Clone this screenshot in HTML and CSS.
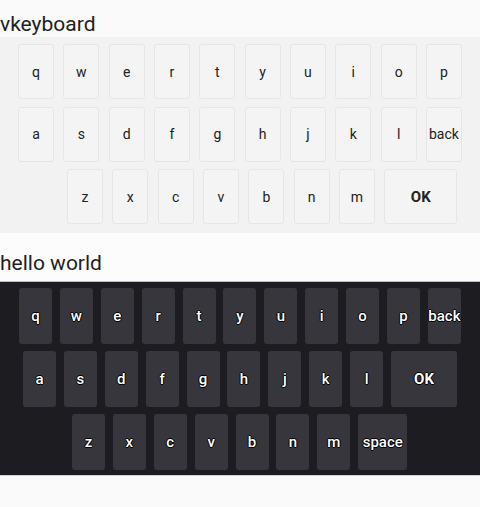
FILE: index.html
```html
<!DOCTYPE html>
<html>
<head>
<meta charset="utf-8">
<link rel="stylesheet" href="styles.css">
</head>
<body>
<div class="title first">vkeyboard</div>
<div class="kb light">
  <div class="row r1">
    <div class="key">q</div><div class="key">w</div><div class="key">e</div><div class="key">r</div><div class="key">t</div><div class="key">y</div><div class="key">u</div><div class="key">i</div><div class="key">o</div><div class="key">p</div>
  </div>
  <div class="row r2">
    <div class="key">a</div><div class="key">s</div><div class="key">d</div><div class="key">f</div><div class="key">g</div><div class="key">h</div><div class="key">j</div><div class="key">k</div><div class="key">l</div><div class="key">back</div>
  </div>
  <div class="row r3">
    <div class="key">z</div><div class="key">x</div><div class="key">c</div><div class="key">v</div><div class="key">b</div><div class="key">n</div><div class="key">m</div><div class="key ok">OK</div>
  </div>
</div>
<div class="title second">hello world</div>
<div class="kb dark">
  <div class="row r1">
    <div class="key">q</div><div class="key">w</div><div class="key">e</div><div class="key">r</div><div class="key">t</div><div class="key">y</div><div class="key">u</div><div class="key">i</div><div class="key">o</div><div class="key">p</div><div class="key">back</div>
  </div>
  <div class="row r2">
    <div class="key">a</div><div class="key">s</div><div class="key">d</div><div class="key">f</div><div class="key">g</div><div class="key">h</div><div class="key">j</div><div class="key">k</div><div class="key">l</div><div class="key ok">OK</div>
  </div>
  <div class="row r3">
    <div class="key">z</div><div class="key">x</div><div class="key">c</div><div class="key">v</div><div class="key">b</div><div class="key">n</div><div class="key">m</div><div class="key space">space</div>
  </div>
</div>
</body>
</html>
```
FILE: styles.css
```css
html, body {
  margin: 0;
  padding: 0;
  background: #fafafa;
  font-family: Roboto, "Liberation Sans", sans-serif;
}
.title {
  box-sizing: border-box;
  font-size: 21px;
  line-height: 23px;
  color: #1e1e1e;
  white-space: nowrap;
}
.title.first {
  height: 37px;
  padding-top: 13px;
}
.title.second {
  height: 48px;
  padding-top: 19px;
  background: #fcfcfc;
}
.kb {
  display: flex;
  flex-direction: column;
}
.row {
  display: flex;
}
.key {
  box-sizing: border-box;
  display: flex;
  align-items: center;
  justify-content: center;
  flex: none;
}

/* light keyboard */
.light {
  background: #f2f2f2;
  padding: 7px 0 9px;
  gap: 7.5px;
}
.light .row {
  gap: 9.33px;
  padding-left: 18px;
}
.light .row.r3 {
  padding-left: 67px;
}
.light .key {
  width: 36px;
  height: 55px;
  background: #f4f4f4;
  border: 1px solid #e6e6e6;
  border-radius: 3px;
  font-size: 14px;
  color: #222;
}
.light .key.ok {
  width: 73px;
  font-weight: 700;
  font-size: 15px;
}

/* dark keyboard */
.dark {
  background: #1d1c21;
  border-top: 1px solid #bdbdbd;
  border-bottom: 1px solid #d4d4d4;
  padding: 6px 0 5px;
  gap: 7px;
}
.dark .row {
  gap: 7.9px;
  padding-left: 19px;
}
.dark .row.r2 {
  padding-left: 23px;
}
.dark .row.r3 {
  padding-left: 72px;
}
.dark .key {
  width: 33px;
  height: 56px;
  background: #37363c;
  border-radius: 3px;
  font-size: 15px;
  font-weight: 500;
  color: #fff;
  text-shadow: -1px 0 0 #000, 1px 0 0 #000, 0 1px 0 #000, 0 -1px 0 #000;
}
.dark .key.ok {
  width: 66px;
  font-weight: 700;
}
.dark .key.space {
  width: 49px;
}
```
